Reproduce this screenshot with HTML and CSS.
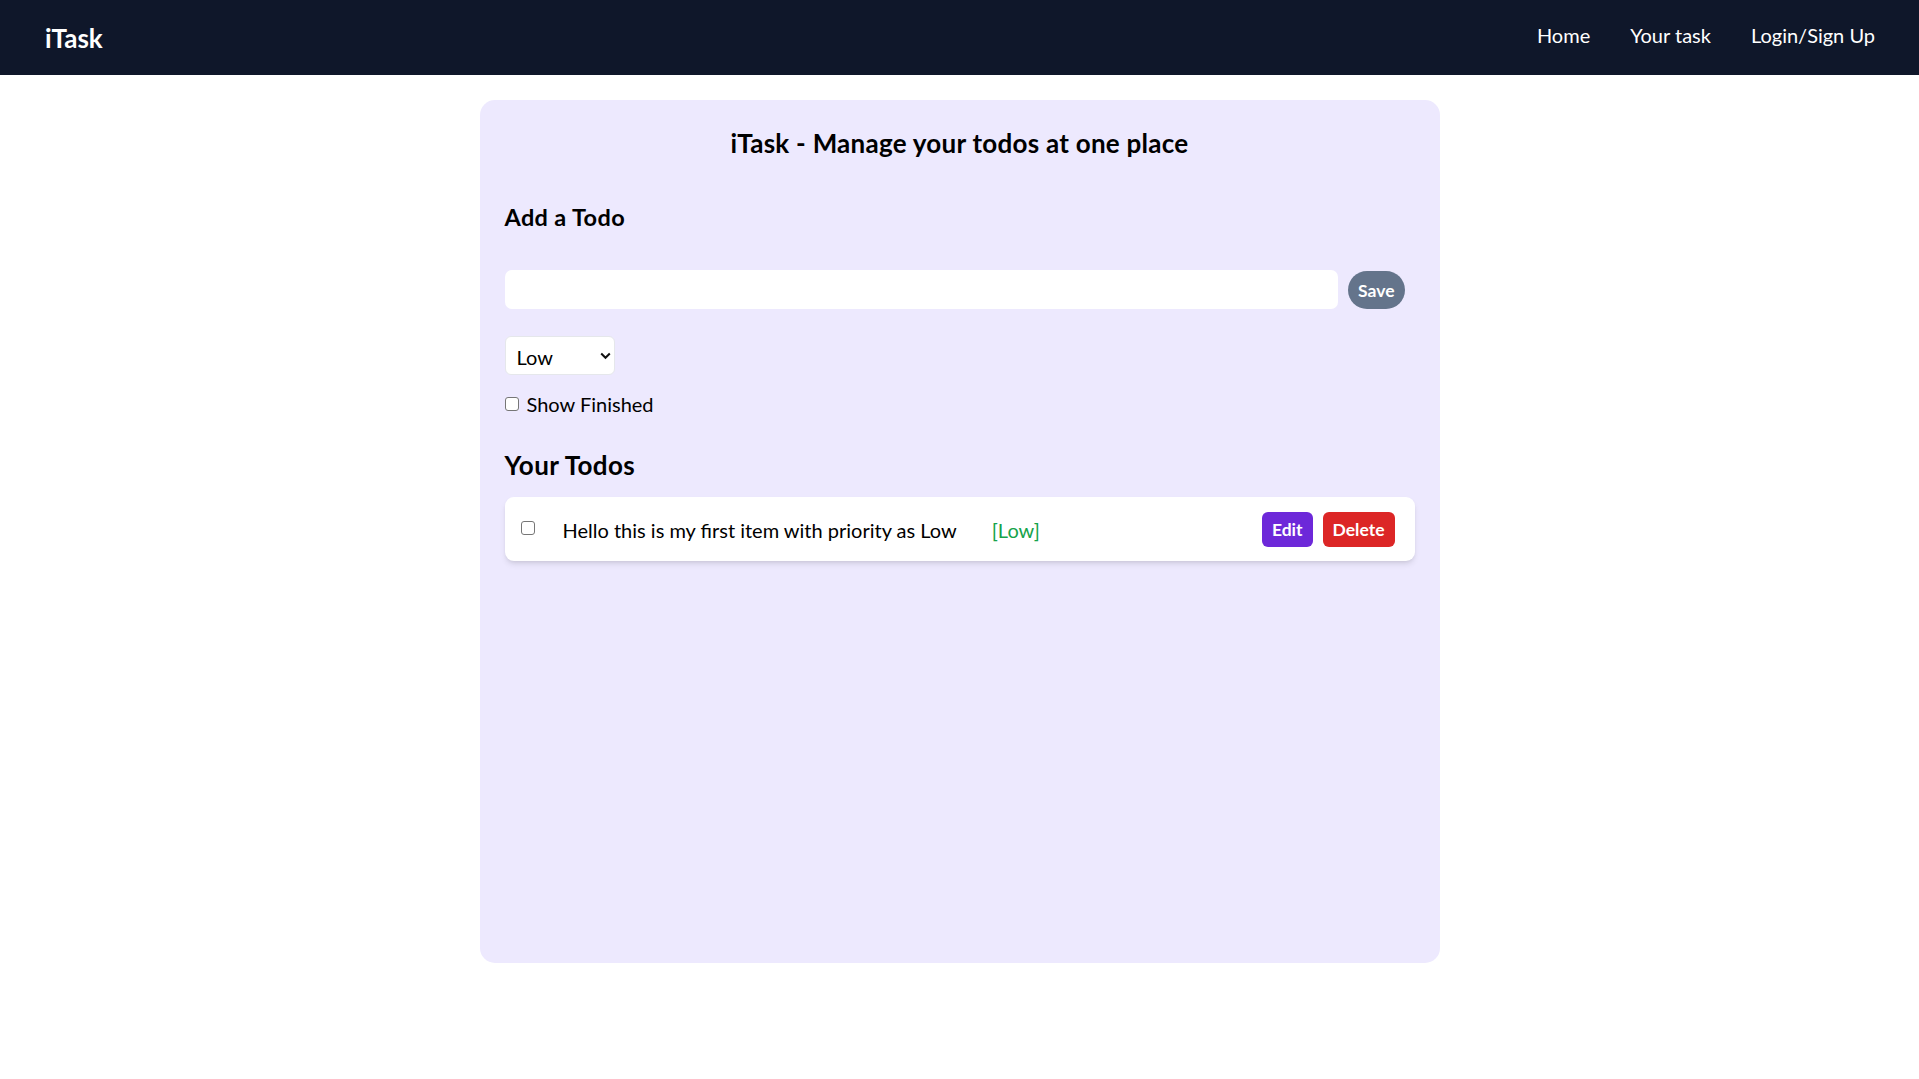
FILE: index.html
```html
<!DOCTYPE html>
<html lang="en">
<head>
<meta charset="utf-8">
<title>iTask</title>
<link rel="stylesheet" href="styles.css">
</head>
<body>
<nav class="nav">
  <div class="logo">iTask</div>
  <ul class="links">
    <li>Home</li>
    <li>Your task</li>
    <li>Login/Sign Up</li>
  </ul>
</nav>
<main class="card">
  <h1 class="title">iTask - Manage your todos at one place</h1>
  <h2 class="add-heading">Add a Todo</h2>
  <div class="add-row">
    <input class="todo-input" type="text">
    <button class="save-btn">Save</button>
  </div>
  <div class="select-wrap">
    <select class="priority">
      <option>Low</option>
      <option>Medium</option>
      <option>High</option>
    </select>
    <svg class="chev" width="11" height="8" viewBox="0 0 11 8"><path d="M1.2 1.5 L5.5 5.8 L9.8 1.5" fill="none" stroke="#111" stroke-width="2"/></svg>
  </div>
  <label class="show-finished"><input type="checkbox" class="box"><span>Show Finished</span></label>
  <h2 class="todos-heading">Your Todos</h2>
  <div class="todo">
    <input type="checkbox" class="box todo-box">
    <span class="todo-text">Hello this is my first item with priority as Low</span>
    <span class="todo-priority">[Low]</span>
    <div class="actions">
      <button class="btn edit">Edit</button>
      <button class="btn delete">Delete</button>
    </div>
  </div>
</main>
</body>
</html>
```
FILE: styles.css
```css
* { box-sizing: border-box; }
body {
  margin: 0;
  font-family: "Lato", "Open Sans", sans-serif;
  color: #000;
  background: #fff;
}
.nav {
  height: 75px;
  background: #0f172a;
  color: #fff;
  display: flex;
  justify-content: space-between;
  align-items: center;
  padding: 0 44px 0 45px;
}
.logo {
  font-size: 26px;
  font-weight: 700;
  line-height: 35px;
  margin-top: 1px;
}
.links {
  display: flex;
  gap: 40px;
  list-style: none;
  margin: 0 0 5px;
  padding: 0;
  font-size: 20px;
}
.card {
  width: 960px;
  min-height: 863px;
  margin: 25px auto;
  background: #ede9fe;
  border-radius: 15px;
  padding: 25px;
}
.title {
  margin: 0;
  text-align: center;
  font-size: 26px;
  letter-spacing: 0.01em;
  line-height: 35px;
  font-weight: 700;
  padding-top: 1px;
}
.add-heading {
  margin: 39px 0 0;
  font-size: 23.5px;
  letter-spacing: 0.015em;
  line-height: 35px;
  font-weight: 700;
}
.add-row {
  margin-top: 35px;
  display: flex;
  align-items: center;
}
.todo-input {
  flex: 1;
  height: 39px;
  border: none;
  border-radius: 7px;
  background: #fff;
  padding: 0 12px;
  font: inherit;
  font-size: 20px;
  outline: none;
}
.save-btn {
  margin: 0 10px;
  height: 38px;
  padding: 0 10px;
  border: none;
  border-radius: 999px;
  background: #64748b;
  color: #fff;
  font-family: inherit;
  font-weight: 700;
  font-size: 17.5px;
  padding-top: 2px;
}
.select-wrap {
  position: relative;
  margin-top: 27px;
  width: 110px;
  height: 39px;
}
.priority {
  appearance: none;
  -webkit-appearance: none;
  width: 100%;
  height: 100%;
  border: 1px solid #e5e7eb;
  border-radius: 6px;
  background: #fff;
  font-family: inherit;
  font-size: 20px;
  padding: 2px 0 0 11px;
  color: #000;
}
.chev {
  position: absolute;
  right: 4px;
  top: 16px;
  pointer-events: none;
}
.show-finished {
  margin-top: 14px;
  height: 30px;
  display: flex;
  align-items: center;
  font-size: 20px;
}
.box {
  appearance: none;
  -webkit-appearance: none;
  width: 14px;
  height: 14px;
  margin: 0 8px 0 0;
  border: 1.5px solid #767676;
  border-radius: 3px;
  background: #fff;
  flex: none;
}
.todos-heading {
  margin: 29px 0 0;
  font-size: 26px;
  letter-spacing: 0.015em;
  line-height: 35px;
  font-weight: 700;
}
.todo {
  margin-top: 14px;
  height: 64px;
  background: #fff;
  border-radius: 9px;
  box-shadow: 0 4px 6px -1px rgba(0,0,0,0.1), 0 2px 4px -2px rgba(0,0,0,0.1);
  display: flex;
  align-items: center;
  padding: 0 20px 0 16px;
  font-size: 20px;
}
.todo-box {
  margin: -2px 28px 0 0;
}
.todo-text {
  padding-top: 1px;
}
.todo-priority {
  margin-left: 35px;
  color: #16a34a;
  padding-top: 1px;
}
.actions {
  margin-left: auto;
  display: flex;
  gap: 10px;
}
.btn {
  height: 35px;
  padding: 1px 10px 0;
  border: none;
  border-radius: 6px;
  color: #fff;
  font-family: inherit;
  font-weight: 700;
  font-size: 17.5px;
}
.edit { background: #6d28d9; }
.delete { background: #dc2626; }
```
